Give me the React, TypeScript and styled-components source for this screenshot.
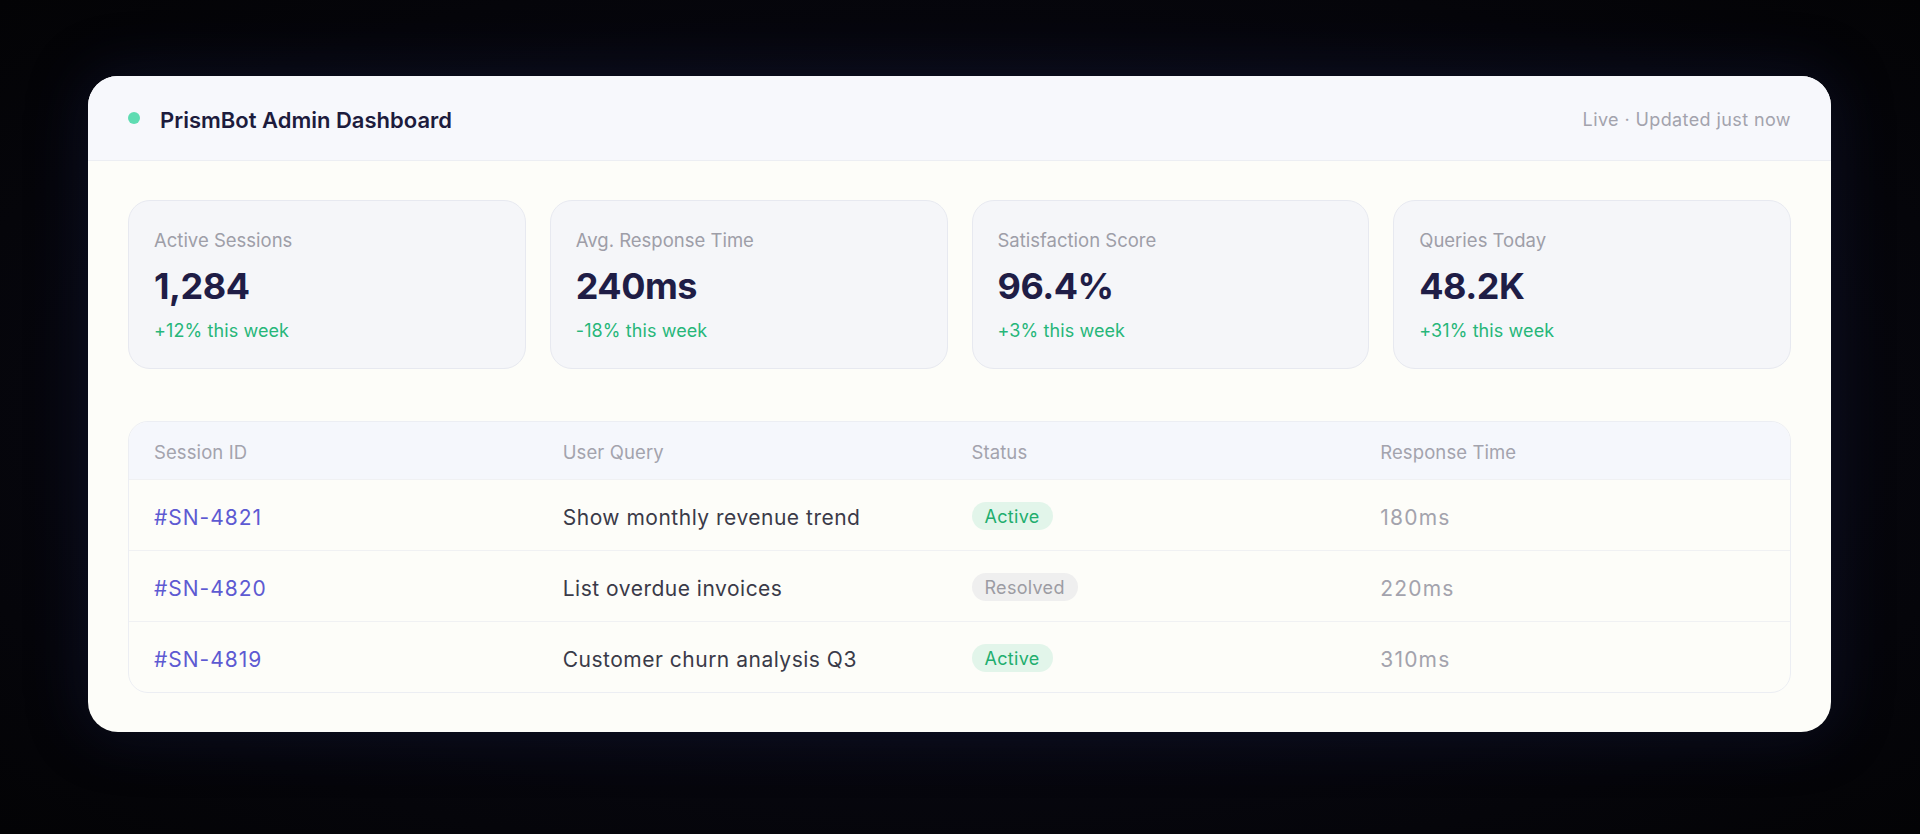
import React from "react";
import styled, { createGlobalStyle } from "styled-components";

const GlobalStyle = createGlobalStyle`
  html, body {
    margin: 0;
    padding: 0;
    background: #040407;
  }
  body {
    font-family: Inter, "Open Sans", sans-serif;
    -webkit-font-smoothing: antialiased;
  }
  * { box-sizing: border-box; }
`;

const Page = styled.div`
  width: 1920px;
  height: 834px;
  padding: 76px 89px 0 88px;
  background: radial-gradient(ellipse at 50% 50%, #0b0c1a 0%, #07070f 55%, #030305 100%);
`;

const Card = styled.div`
  width: 1743px;
  height: 656px;
  border-radius: 30px;
  background: #fdfdf9;
  overflow: hidden;
  box-shadow: 0 0 60px rgba(30, 36, 90, 0.35);
  display: flex;
  flex-direction: column;
`;

const Header = styled.header`
  height: 85px;
  flex: none;
  display: flex;
  align-items: center;
  padding: 3px 40px 0;
  background: #f7f8fc;
  border-bottom: 1px solid #eceef3;
`;

const Dot = styled.span`
  width: 12px;
  height: 12px;
  border-radius: 50%;
  background: #5fdcb2;
  margin-right: 20px;
  margin-top: -3px;
  flex: none;
`;

const Title = styled.h1`
  margin: 0;
  font-size: 22px;
  font-weight: 600;
  color: #1d1c3d;
  letter-spacing: 0;
`;

const Live = styled.span`
  margin-left: auto;
  font-size: 18px;
  color: #a3a3ad;
  letter-spacing: 0.4px;
`;

const Body = styled.div`
  padding: 39px 40px 40px;
  display: flex;
  flex-direction: column;
  gap: 52px;
`;

const StatGrid = styled.div`
  display: grid;
  grid-template-columns: repeat(4, 1fr);
  gap: 24px;
`;

const StatCard = styled.div`
  height: 169px;
  border: 1.5px solid #e7e9f0;
  border-radius: 22px;
  background: #f5f6f9;
  padding: 28px 25px 26px;
  display: flex;
  flex-direction: column;
`;

const StatLabel = styled.div`
  font-size: 18.5px;
  line-height: 22px;
  color: #9e9ea8;
  letter-spacing: 0;
`;

const StatValue = styled.div`
  margin-top: 13px;
  font-size: 36px;
  line-height: 44px;
  font-weight: 700;
  color: #1f1d46;
  letter-spacing: -0.5px;
`;

const StatDelta = styled.div`
  margin-top: 12px;
  font-size: 18px;
  line-height: 22px;
  color: #27b679;
  letter-spacing: 0.1px;
`;

const Table = styled.div`
  border: 1.5px solid #eceef3;
  border-radius: 20px;
  overflow: hidden;
`;

const Row = styled.div<{ $head?: boolean }>`
  display: grid;
  grid-template-columns: repeat(4, 1fr);
  column-gap: 24px;
  align-items: center;
  padding: ${(p) => (p.$head ? "2px 25px 0" : "4px 25px 0")};
  height: ${(p) => (p.$head ? "57px" : "71px")};
  background: ${(p) => (p.$head ? "#f5f7fc" : "transparent")};
  border-top: ${(p) => (p.$head ? "none" : "1px solid #f0f1f3")};
`;

const HeadCell = styled.div`
  font-size: 18.5px;
  color: #a3a3ad;
  letter-spacing: 0.1px;
`;

const IdCell = styled.div`
  font-size: 21px;
  color: #5d5ad2;
  letter-spacing: 1px;
`;

const QueryCell = styled.div`
  font-size: 21px;
  color: #3a3a48;
  letter-spacing: 0.5px;
`;

const TimeCell = styled.div`
  font-size: 21px;
  color: #a3a3ad;
  letter-spacing: 1.2px;
`;

const Badge = styled.span<{ $active: boolean }>`
  justify-self: start;
  display: inline-flex;
  align-items: center;
  height: 28px;
  margin-top: -2px;
  padding: 0 13px;
  border-radius: 999px;
  font-size: 18px;
  letter-spacing: 0.3px;
  background: ${(p) => (p.$active ? "#e2f5ea" : "#efefef")};
  color: ${(p) => (p.$active ? "#22ae6e" : "#9c9ca3")};
`;

const stats = [
  { label: "Active Sessions", value: "1,284", delta: "+12% this week" },
  { label: "Avg. Response Time", value: "240ms", delta: "-18% this week" },
  { label: "Satisfaction Score", value: "96.4%", delta: "+3% this week" },
  { label: "Queries Today", value: "48.2K", delta: "+31% this week" },
];

const sessions = [
  { id: "#SN-4821", query: "Show monthly revenue trend", status: "Active", time: "180ms" },
  { id: "#SN-4820", query: "List overdue invoices", status: "Resolved", time: "220ms" },
  { id: "#SN-4819", query: "Customer churn analysis Q3", status: "Active", time: "310ms" },
];

export default function App() {
  return (
    <>
      <GlobalStyle />
      <Page>
        <Card>
          <Header>
            <Dot />
            <Title>PrismBot Admin Dashboard</Title>
            <Live>Live · Updated just now</Live>
          </Header>
          <Body>
            <StatGrid>
              {stats.map((s) => (
                <StatCard key={s.label}>
                  <StatLabel>{s.label}</StatLabel>
                  <StatValue>{s.value}</StatValue>
                  <StatDelta>{s.delta}</StatDelta>
                </StatCard>
              ))}
            </StatGrid>
            <Table>
              <Row $head>
                <HeadCell>Session ID</HeadCell>
                <HeadCell>User Query</HeadCell>
                <HeadCell>Status</HeadCell>
                <HeadCell>Response Time</HeadCell>
              </Row>
              {sessions.map((r) => (
                <Row key={r.id}>
                  <IdCell>{r.id}</IdCell>
                  <QueryCell>{r.query}</QueryCell>
                  <Badge $active={r.status === "Active"}>{r.status}</Badge>
                  <TimeCell>{r.time}</TimeCell>
                </Row>
              ))}
            </Table>
          </Body>
        </Card>
      </Page>
    </>
  );
}
